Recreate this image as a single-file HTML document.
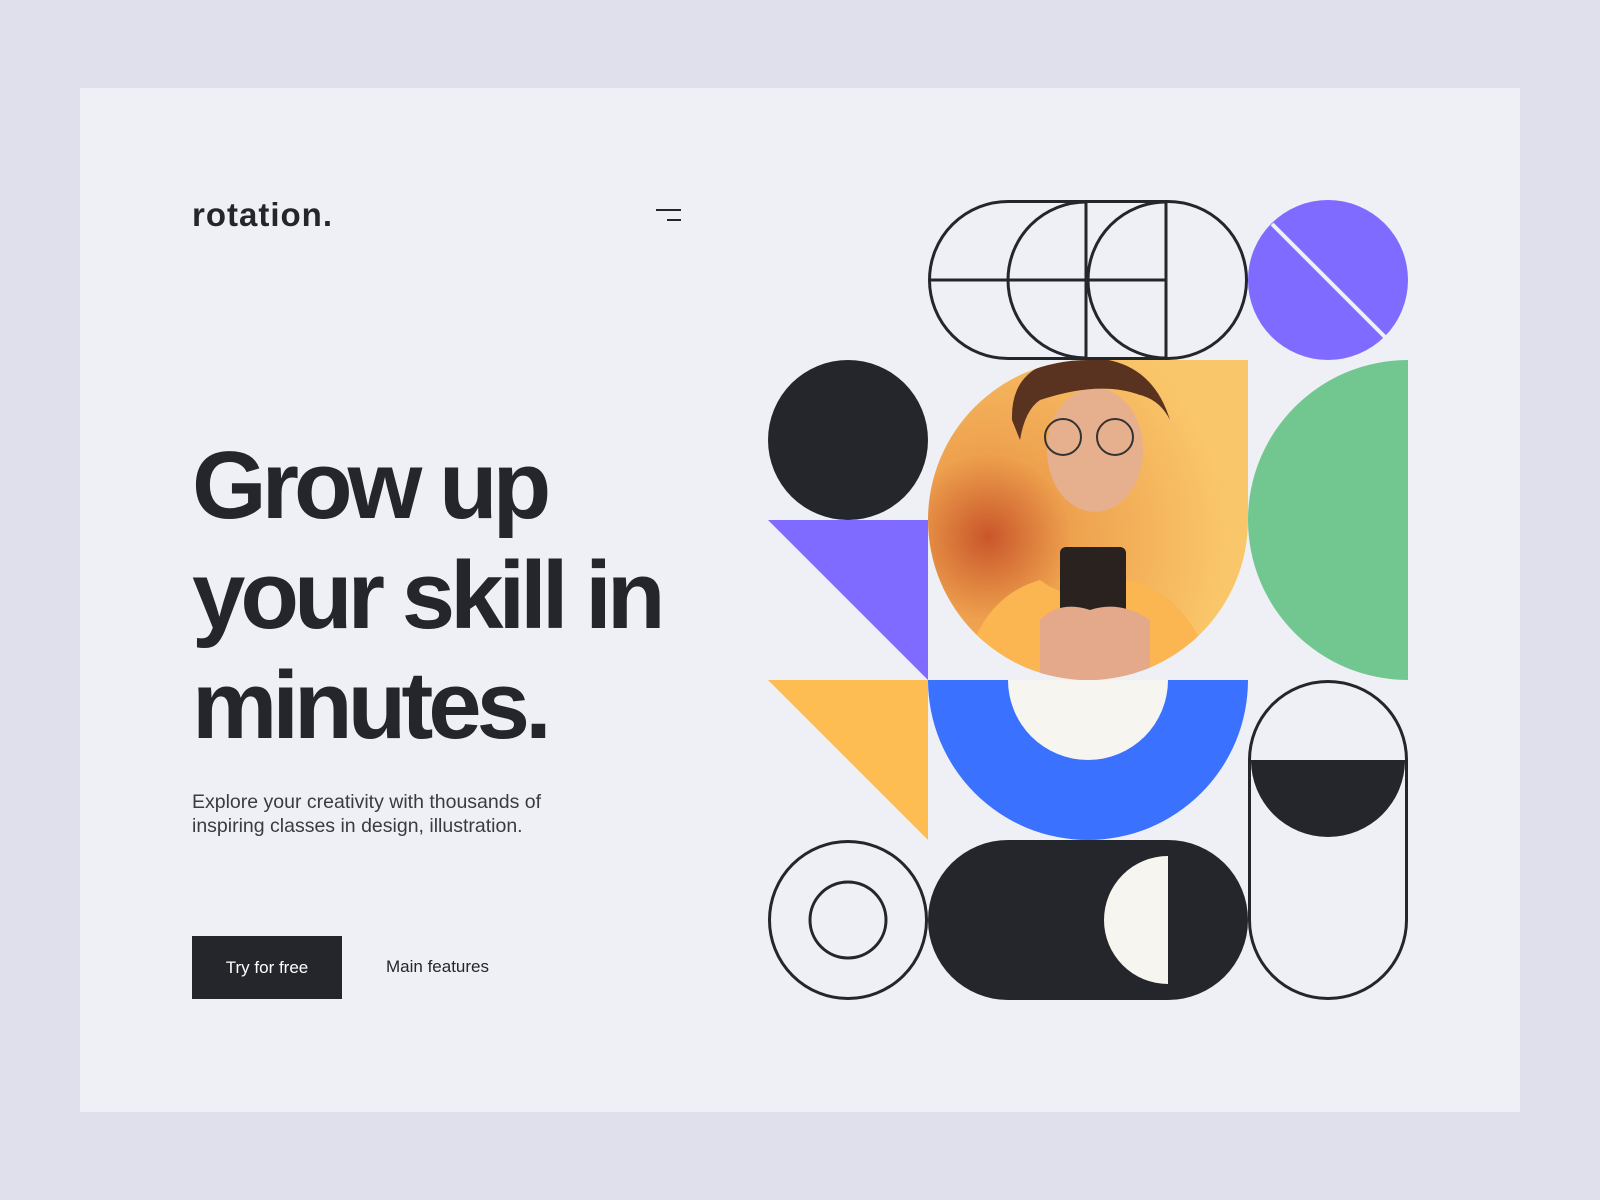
<!DOCTYPE html>
<html><head><meta charset="utf-8"><style>
html,body{margin:0;padding:0}
body{width:1600px;height:1200px;background:#dfe0eb;position:relative;overflow:hidden;font-family:"Liberation Sans",sans-serif;color:#25262b}
.card{position:absolute;left:80px;top:88px;width:1440px;height:1024px;background:#eff0f5}
.logo{position:absolute;left:192px;top:196px;font-size:33px;font-weight:bold;letter-spacing:1px}
.h1{position:absolute;left:192px;top:431px;font-size:96px;line-height:110px;letter-spacing:-5px;font-weight:bold;margin:0}
.p{position:absolute;left:192px;top:790px;font-size:19.5px;line-height:24px;color:#3a3b40}
.btn{position:absolute;left:192px;top:936px;width:150px;height:63px;background:#25262b;color:#fff;font-size:17px;line-height:63px;text-align:center}
.link{position:absolute;left:386px;top:957px;font-size:17px}
svg{position:absolute;left:0;top:0}
</style></head><body>
<div class="card"></div>
<div class="logo">rotation.</div>
<h1 class="h1">Grow up<br>your skill in<br>minutes.</h1>
<div class="p">Explore your creativity with thousands of<br>inspiring classes in design, illustration.</div>
<div class="btn">Try for free</div>
<div class="link">Main features</div>
<svg width="1600" height="1200" viewBox="0 0 1600 1200">
<defs>
<radialGradient id="bg" cx="0.2" cy="0.55" r="0.7"><stop offset="0" stop-color="#c9562a"/><stop offset="0.35" stop-color="#eea14e"/><stop offset="1" stop-color="#fac66a"/></radialGradient>
<clipPath id="ph"><path d="M1088 360 H1248 V520 A160 160 0 1 1 1088 360 Z"/></clipPath>
</defs>
<g stroke="#25262b" stroke-width="3" fill="none">
<line x1="656" y1="210" x2="681" y2="210" stroke-width="2"/><line x1="667" y1="220" x2="681" y2="220" stroke-width="2"/>
<rect x="929.5" y="201.5" width="317" height="157" rx="78.5"/>
<path d="M1086 202 A78 78 0 0 0 1086 358"/>
<path d="M1166 202 A78 78 0 0 0 1166 358"/>
<line x1="1086" y1="201" x2="1086" y2="359"/><line x1="1166" y1="201" x2="1166" y2="359"/>
<line x1="929" y1="280" x2="1166" y2="280"/>
<rect x="1249.5" y="681.5" width="157" height="317" rx="78.5"/>
<circle cx="848" cy="920" r="78.5"/><circle cx="848" cy="920" r="38"/>
</g>
<circle cx="1328" cy="280" r="80" fill="#7f6bff"/>
<line x1="1272" y1="224" x2="1386" y2="338" stroke="#eff0f5" stroke-width="4"/>
<circle cx="848" cy="440" r="80" fill="#25262b"/>
<path d="M768 520 H928 V680 Z" fill="#7f6bff"/>
<path d="M768 680 H928 V840 Z" fill="#fdbd52"/>
<path d="M1408 360 V680 A160 160 0 0 1 1408 360 Z" fill="#71c78f"/>
<path d="M928 680 H1248 A160 160 0 0 1 928 680 Z" fill="#3a72ff"/>
<path d="M1008 680 H1168 A80 80 0 0 1 1008 680 Z" fill="#f7f5f0"/>
<path d="M1251 760 H1405 A77 77 0 0 1 1251 760 Z" fill="#25262b"/>
<rect x="928" y="840" width="320" height="160" rx="80" fill="#25262b"/>
<path d="M1168 856 V984 A64 64 0 0 1 1168 856 Z" fill="#f7f5f0"/>
<g clip-path="url(#ph)">
<rect x="920" y="350" width="340" height="340" fill="url(#bg)"/>
<path d="M960 700 Q970 600 1040 580 Q1080 610 1130 580 Q1200 600 1215 690 Z" fill="#fbb551"/>
<ellipse cx="1095" cy="450" rx="48" ry="62" fill="#e6b08e"/>
<path d="M1012 420 Q1010 360 1080 358 Q1150 355 1170 420 Q1160 400 1140 395 Q1100 380 1040 400 Q1025 410 1020 440 Z" fill="#5a3320"/>
<circle cx="1063" cy="437" r="18" fill="none" stroke="#333" stroke-width="2"/>
<circle cx="1115" cy="437" r="18" fill="none" stroke="#333" stroke-width="2"/>
<rect x="1060" y="547" width="66" height="100" rx="6" fill="#2a221f"/>
<path d="M1040 620 Q1060 600 1090 610 Q1120 600 1150 620 L1150 690 L1040 690 Z" fill="#e3a98a"/>
</g>
</svg>
</body></html>
